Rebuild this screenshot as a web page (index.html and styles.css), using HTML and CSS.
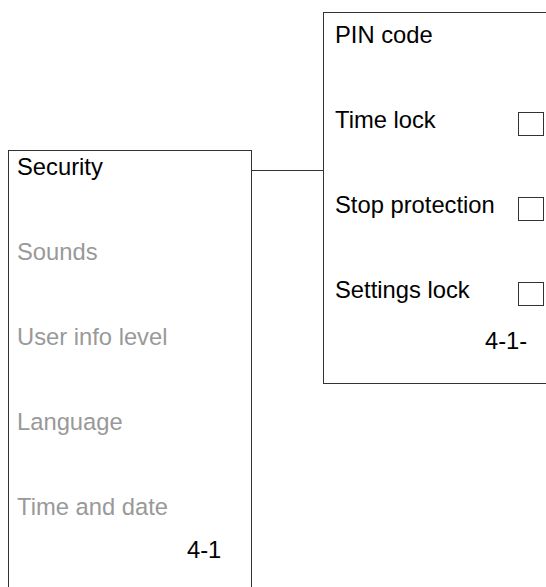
FILE: index.html
```html
<!DOCTYPE html>
<html lang="en">
<head>
    <meta charset="UTF-8">
    <meta name="viewport" content="width=device-width, initial-scale=1.0">
    <title>Settings menu</title>
    <link rel="stylesheet" href="styles.css">
</head>
<body>
    <div class="canvas">
        <div class="menu">
            <div class="item active">Security</div>
            <div class="item">Sounds</div>
            <div class="item">User info level</div>
            <div class="item">Language</div>
            <div class="item">Time and date</div>
            <div class="page-no">4-1</div>
        </div>

        <div class="link"></div>

        <div class="submenu">
            <div class="item">PIN code</div>
            <div class="item">
                <span class="label">Time lock</span>
                <span class="check"></span>
            </div>
            <div class="item">
                <span class="label">Stop protection</span>
                <span class="check"></span>
            </div>
            <div class="item">
                <span class="label">Settings lock</span>
                <span class="check"></span>
            </div>
            <div class="page-no">4-1-</div>
        </div>
    </div>
</body>
</html>
```

FILE: styles.css
```css
html, body {
    margin: 0;
    height: 100%;
    overflow: hidden;
    background-color: #fff;
}

body {
    font-family: "Liberation Sans", Arial, sans-serif;
    font-size: 23.75px;
    color: #000;
}

.canvas {
    display: flex;
    align-items: flex-start;
    padding-left: 8px;
}

.item {
    line-height: 27px;
    height: 27px;
    white-space: nowrap;
}

/* left menu */
.menu {
    box-sizing: border-box;
    width: 244px;
    height: 437px;
    margin-top: 150px;
    padding: 2px 0 0 8px;
    border: 1px solid #333;
    border-bottom: none;
    display: flex;
    flex-direction: column;
    gap: 58px;
    flex-shrink: 0;
}

.menu .item {
    color: #999;
}

.menu .item.active {
    color: #000;
}

.menu .page-no {
    line-height: 27px;
    margin-top: -42px;
    padding-left: 170px;
}

/* connector */
.link {
    width: 71px;
    height: 1px;
    margin-top: 170px;
    background-color: #333;
    flex-shrink: 0;
}

/* right submenu */
.submenu {
    box-sizing: border-box;
    width: 223px;
    height: 372px;
    margin-top: 12px;
    padding: 8px 0 0 11px;
    border: 1px solid #333;
    border-right: none;
    display: flex;
    flex-direction: column;
    gap: 58px;
    flex-shrink: 0;
}

.submenu .item {
    display: flex;
    align-items: flex-start;
}

.label {
    width: 183px;
    flex-shrink: 0;
}

.check {
    box-sizing: border-box;
    width: 26px;
    height: 24px;
    margin-top: 6px;
    border: 1px solid #333;
    flex-shrink: 0;
}

.submenu .page-no {
    line-height: 27px;
    margin-top: -34px;
    padding-left: 150px;
}
```
